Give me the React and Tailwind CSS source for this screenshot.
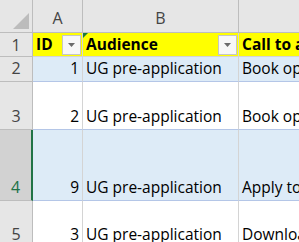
import React from 'react';

const font = { fontFamily: '"Open Sans", "Liberation Sans", sans-serif' };

function FilterBtn() {
  return (
    <div className="w-[19px] h-[20px] bg-[#f7f7f7] border border-[#c6c6c6] flex items-center justify-center">
      <svg width="7" height="4" viewBox="0 0 7 4">
        <path d="M0 0h7L3.5 4z" fill="#6b6b6b" />
      </svg>
    </div>
  );
}

const rows = [
  { n: 2, id: 1, aud: 'UG pre-application', cta: 'Book open day', h: 'h-[25px]', band: true },
  { n: 3, id: 2, aud: 'UG pre-application', cta: 'Book open day', h: 'h-[48px]', band: false },
  { n: 4, id: 9, aud: 'UG pre-application', cta: 'Apply today', h: 'h-[71px]', band: true, sel: true },
  { n: 5, id: 3, aud: 'UG pre-application', cta: 'Download guide', h: 'h-[47px]', band: false },
];

export default function App() {
  return (
    <div className="w-[299px] h-[242px] overflow-hidden bg-white text-[15.5px] text-black" style={font}>
      <div className="grid grid-cols-[33px_50px_156px_120px]">
        {/* column headers */}
        <div className="h-[33px] bg-[#e6e6e6] border-r border-b border-[#bdbdbd] relative">
          <svg className="absolute right-[3px] bottom-[3px]" width="16" height="16" viewBox="0 0 16 16">
            <path d="M16 0v16H0z" fill="#bcbcbc" />
          </svg>
        </div>
        <div className="h-[33px] bg-[#e6e6e6] border-r border-b border-[#bdbdbd] flex items-end justify-center pb-[2px] text-[#444] text-[16px]">A</div>
        <div className="h-[33px] bg-[#e6e6e6] border-r border-b border-[#bdbdbd] flex items-end justify-center pb-[2px] text-[#444] text-[16px]">B</div>
        <div className="h-[33px] bg-[#e6e6e6] border-b border-[#bdbdbd]"></div>

        {/* row 1: table header */}
        <div className="h-[24px] bg-[#e6e6e6] border-r border-b border-[#bdbdbd] flex items-center justify-center text-[#444] text-[16px]">1</div>
        <div className="h-[24px] bg-[#ffff00] border-r border-b border-[#d4d4d4] flex items-center justify-between pl-[3px] pr-[1px] font-bold">
          <span>ID</span>
          <FilterBtn />
        </div>
        <div className="h-[24px] bg-[#ffff00] border-r border-b border-[#d4d4d4] flex items-center justify-between pl-[3px] pr-[1px] font-bold relative">
          <svg className="absolute left-0 top-0" width="5" height="5" viewBox="0 0 5 5">
            <path d="M0 0h5L0 5z" fill="#1e7a3a" />
          </svg>
          <span>Audience</span>
          <FilterBtn />
        </div>
        <div className="h-[24px] bg-[#ffff00] border-b border-[#d4d4d4] flex items-center pl-[3px] font-bold whitespace-nowrap">Call to action</div>

        {rows.map((r) => {
          const cell = `${r.h} ${r.band ? 'bg-[#ddebf7]' : 'bg-white'} border-b border-[#b4c6e7] flex items-end pb-[1px] whitespace-nowrap`;
          return (
            <React.Fragment key={r.n}>
              <div
                className={`${r.h} border-b border-[#bdbdbd] flex items-end justify-center pb-[1px] text-[16px] ${
                  r.sel ? 'bg-[#d2d2d2] text-[#217346] border-r-2 border-r-[#217346]' : 'bg-[#e6e6e6] text-[#444] border-r border-r-[#bdbdbd]'
                }`}
              >
                {r.n}
              </div>
              <div className={`${cell} border-r border-r-[#d4d4d4] justify-end pr-[3px]`}>{r.id}</div>
              <div className={`${cell} border-r border-r-[#d4d4d4] pl-[3px]`}>{r.aud}</div>
              <div className={`${cell} pl-[3px]`}>{r.cta}</div>
            </React.Fragment>
          );
        })}
      </div>
    </div>
  );
}
